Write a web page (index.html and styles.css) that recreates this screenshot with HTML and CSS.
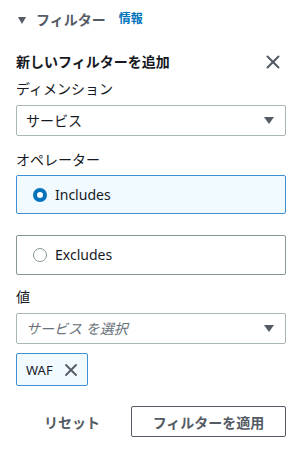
FILE: index.html
```html
<!DOCTYPE html>
<html lang="ja">
<head>
    <meta charset="UTF-8">
    <meta name="viewport" content="width=device-width, initial-scale=1.0">
    <title>フィルター</title>
    <link rel="stylesheet" href="styles.css">
</head>
<body>
    <!-- Section header -->
    <div class="section-header">
        <span class="caret"></span>
        <span class="section-title">フィルター</span>
        <a class="info-link" href="#">情報</a>
    </div>

    <!-- Add filter panel -->
    <div class="panel">
        <div class="panel-head">
            <h2 class="panel-title">新しいフィルターを追加</h2>
            <button class="close-button" aria-label="閉じる">
                <svg width="14" height="14" viewBox="0 0 14 14" fill="none" stroke="currentColor" stroke-width="2" stroke-linecap="round">
                    <path d="M1.5 1.5l11 11"></path>
                    <path d="M12.5 1.5l-11 11"></path>
                </svg>
            </button>
        </div>

        <div class="field-label">ディメンション</div>
        <div class="select">
            <span class="select-value">サービス</span>
            <span class="select-caret"></span>
        </div>

        <div class="field-label label-operator">オペレーター</div>
        <label class="tile tile-selected">
            <span class="radio radio-checked"></span>
            <span class="tile-text">Includes</span>
        </label>
        <label class="tile tile-second">
            <span class="radio"></span>
            <span class="tile-text">Excludes</span>
        </label>

        <div class="field-label label-value">値</div>
        <div class="select">
            <span class="select-placeholder">サービス を選択</span>
            <span class="select-caret"></span>
        </div>

        <div class="token">
            <span class="token-text">WAF</span>
            <svg width="12" height="12" viewBox="0 0 12 12" fill="none" stroke="currentColor" stroke-width="1.8" stroke-linecap="round">
                <path d="M1 1l10 10"></path>
                <path d="M11 1L1 11"></path>
            </svg>
        </div>

        <div class="actions">
            <button class="btn-link">リセット</button>
            <button class="btn-normal">フィルターを適用</button>
        </div>
    </div>
</body>
</html>
```

FILE: styles.css
```css
/* Reset and base styles */
* {
    margin: 0;
    padding: 0;
    box-sizing: border-box;
}

body {
    font-family: "Noto Sans", "Noto Sans CJK JP", sans-serif;
    font-size: 14px;
    line-height: 20px;
    color: #16191f;
    background-color: #ffffff;
    padding: 10px 18px 0 16px;
}

/* Section header */
.section-header {
    display: flex;
    align-items: center;
    height: 20px;
    padding-left: 2px;
}

.caret {
    width: 0;
    height: 0;
    border-left: 4px solid transparent;
    border-right: 4px solid transparent;
    border-top: 7px solid #545b64;
    margin-right: 10px;
}

.section-title {
    font-weight: 700;
    color: #545b64;
    font-size: 14px;
}

.info-link {
    margin-left: 13px;
    font-size: 12px;
    font-weight: 700;
    color: #0073bb;
    text-decoration: none;
    margin-top: -3px;
}

/* Panel */
.panel-head {
    display: flex;
    align-items: center;
    justify-content: space-between;
    margin-top: 22px;
}

.panel-title {
    font-size: 14px;
    font-weight: 700;
    line-height: 20px;
}

.close-button {
    background: none;
    border: none;
    color: #545b64;
    display: flex;
    margin-right: 6px;
    margin-top: -1px;
}

.field-label {
    margin-top: 7px;
    margin-bottom: 6px;
}

.label-operator {
    margin-top: 14px;
    margin-bottom: 5px;
}

.label-value {
    margin-top: 12px;
}

/* Select */
.select {
    display: flex;
    align-items: center;
    justify-content: space-between;
    height: 31px;
    border: 1px solid #aab7b8;
    border-radius: 2px;
    padding: 0 11px 0 9px;
}

.select-placeholder {
    font-style: italic;
    color: #687078;
}

.select-caret {
    width: 0;
    height: 0;
    border-left: 5px solid transparent;
    border-right: 5px solid transparent;
    border-top: 7px solid #545b64;
}

/* Radio tiles */
.tile {
    display: flex;
    align-items: center;
    height: 39px;
    border: 1px solid #879596;
    border-radius: 2px;
    padding-left: 16px;
}

.tile-selected {
    border-color: #3f8fd2;
    background-color: #f1faff;
}

.tile-second {
    margin-top: 21px;
    height: 40px;
}

.radio {
    width: 14px;
    height: 14px;
    border-radius: 50%;
    border: 1px solid #879596;
    background-color: #ffffff;
    margin-right: 8px;
}

.radio-checked {
    border: 4px solid #0073bb;
}

.tile-text {
    font-size: 14px;
}

/* Token */
.token {
    display: inline-flex;
    align-items: center;
    gap: 12px;
    margin-top: 9px;
    height: 33px;
    border: 1px solid #3f8fd2;
    border-radius: 2px;
    background-color: #f1faff;
    padding: 0 10px 0 9px;
    color: #545b64;
}

.token-text {
    color: #16191f;
    font-size: 13px;
}

/* Actions */
.actions {
    display: flex;
    justify-content: flex-end;
    align-items: center;
    gap: 11px;
    margin-top: 20px;
}

.btn-link,
.btn-normal {
    font-family: inherit;
    font-size: 14px;
    font-weight: 700;
    color: #545b64;
    background: none;
    height: 31px;
    border-radius: 2px;
}

.btn-link {
    border: none;
    padding: 0 20px;
}

.btn-normal {
    width: 155px;
    border: 1px solid #545b64;
}
```
